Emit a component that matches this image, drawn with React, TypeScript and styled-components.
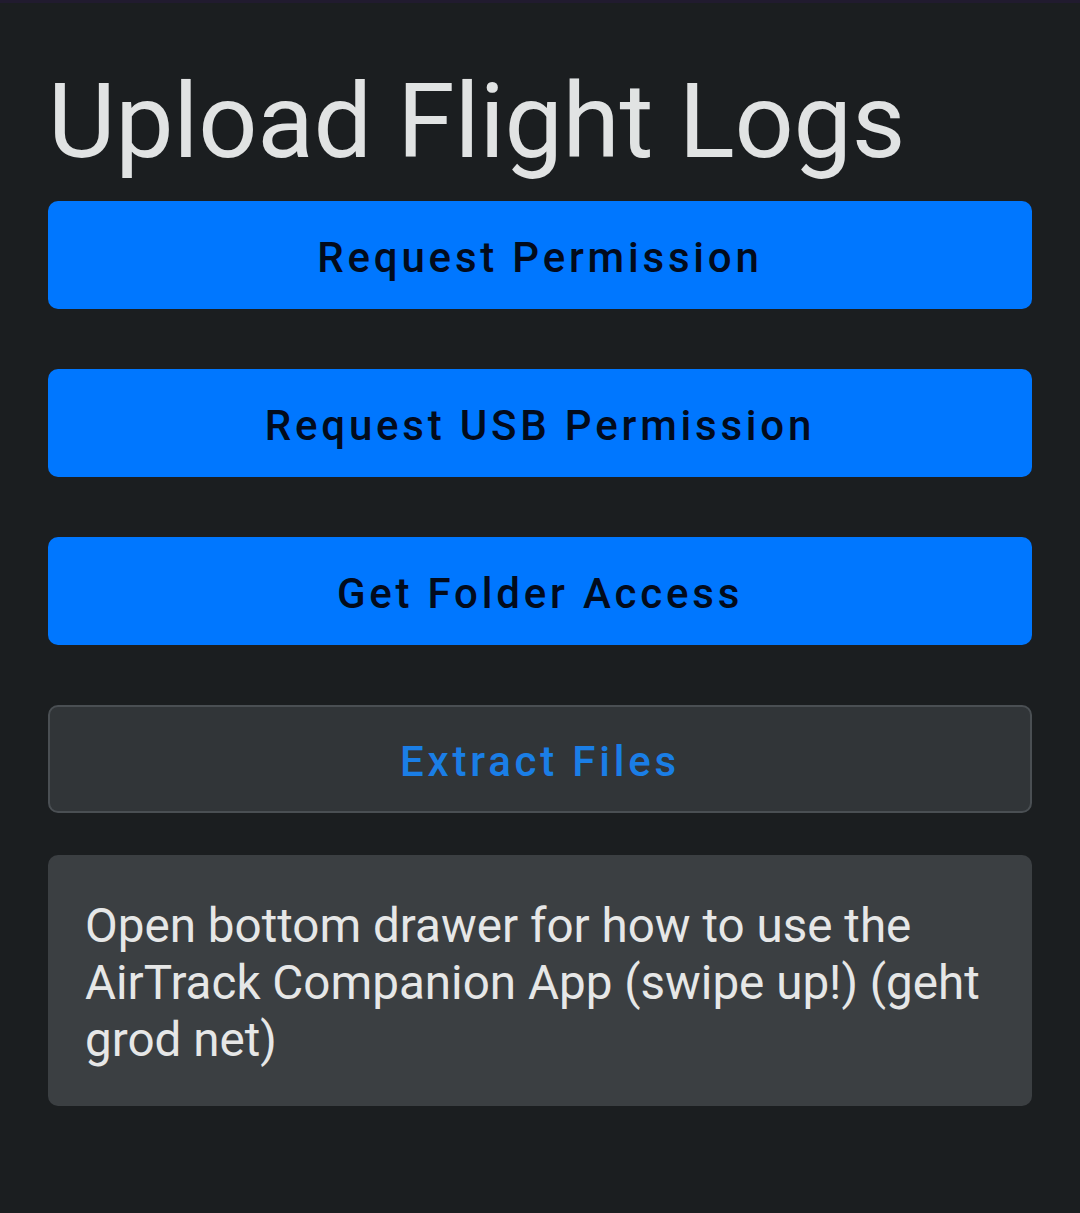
import React from 'react';
import styled, { createGlobalStyle } from 'styled-components';

const GlobalStyle = createGlobalStyle`
  html, body {
    margin: 0;
    padding: 0;
    background: #1b1e20;
  }
  body {
    font-family: Roboto, "Noto Sans", "Liberation Sans", sans-serif;
  }
`;

const Screen = styled.div`
  min-height: 1213px;
  background: #1b1e20;
  border-top: 3px solid #211b2f;
  box-sizing: border-box;
`;

const Content = styled.main`
  display: flex;
  flex-direction: column;
  padding: 58px 48px 0 48px;
`;

const Title = styled.h1`
  margin: 0 0 19px 0;
  font-size: 104px;
  font-weight: 400;
  line-height: normal;
  color: #e1e3e3;
  letter-spacing: -0.3px;
`;

const ButtonList = styled.div`
  display: flex;
  flex-direction: column;
  gap: 60px;
`;

const ActionButton = styled.button<{ $outlined?: boolean }>`
  height: 108px;
  width: 100%;
  border-radius: 10px;
  border: ${(p) => (p.$outlined ? '2px solid #4a4f53' : 'none')};
  background: ${(p) => (p.$outlined ? '#313538' : '#0077ff')};
  color: ${(p) => (p.$outlined ? '#1a7ee6' : '#020b1c')};
  font-family: Roboto, "Liberation Sans", sans-serif;
  font-size: 42px;
  font-weight: 500;
  letter-spacing: 3.8px;
  display: flex;
  align-items: center;
  justify-content: center;
  padding: 5px 0 0 0;
  cursor: pointer;
`;

const InfoBox = styled.div`
  margin-top: 42px;
  background: #3b3f42;
  border-radius: 10px;
  padding: 43px 36px 37px 37px;
  font-size: 47.6px;
  line-height: 57px;
  color: #e6e7e7;
`;

export default function App() {
  return (
    <Screen>
      <GlobalStyle />
      <Content>
        <Title>Upload Flight Logs</Title>
        <ButtonList>
          <ActionButton>Request Permission</ActionButton>
          <ActionButton>Request USB Permission</ActionButton>
          <ActionButton>Get Folder Access</ActionButton>
          <ActionButton $outlined>Extract Files</ActionButton>
        </ButtonList>
        <InfoBox>
          Open bottom drawer for how to use the AirTrack Companion App (swipe up!) (geht grod net)
        </InfoBox>
      </Content>
    </Screen>
  );
}
